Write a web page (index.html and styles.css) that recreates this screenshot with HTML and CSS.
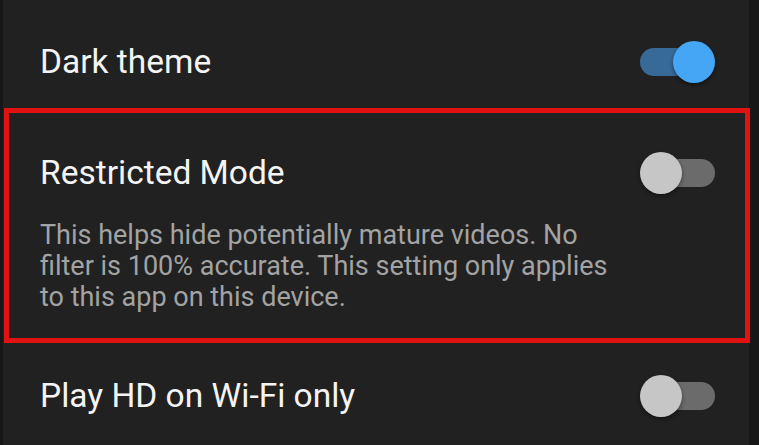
FILE: index.html
```html
<!DOCTYPE html>
<html>

<head>
    <meta charset="utf-8">
    <title>Settings</title>
    <link rel="stylesheet" href="styles.css">
</head>

<body>
    <div id="panel">
        <div class="row first">
            <p class="title">Dark theme</p>
            <div class="switch on">
                <span class="track"></span>
                <span class="thumb"></span>
            </div>
        </div>
        <div class="row highlight">
            <div class="head">
                <p class="title">Restricted Mode</p>
                <div class="switch">
                    <span class="track"></span>
                    <span class="thumb"></span>
                </div>
            </div>
            <p class="desc">This helps hide potentially mature videos. No filter is 100% accurate. This setting only applies to this app on this device.</p>
        </div>
        <div class="row last">
            <p class="title">Play HD on Wi-Fi only</p>
            <div class="switch">
                <span class="track"></span>
                <span class="thumb"></span>
            </div>
        </div>
    </div>
</body>

</html>
```

FILE: styles.css
```css
* {
    margin: 0;
    padding: 0;
    box-sizing: border-box;
}

body {
    background-color: #171717;
    font-family: 'Roboto', sans-serif;
    height: 445px;
    overflow: hidden;
}

#panel {
    background-color: #212121;
    margin-left: 3px;
    width: 746px;
    height: 445px;
}

.row {
    display: flex;
    align-items: center;
    justify-content: space-between;
    padding-left: 37px;
    padding-right: 34px;
}
.row.first {
    height: 108px;
    padding-top: 16px;
}
.row.last {
    height: 102px;
    align-items: flex-start;
    padding-top: 32px;
}

.row.highlight {
    display: block;
    height: 235px;
    margin-left: 1px;
    margin-right: -1px;
    border: 5px solid #e01212;
    padding: 39px 30px 0 31px;
}
.head {
    display: flex;
    align-items: center;
    justify-content: space-between;
}

.title {
    color: #f4f4f4;
    font-size: 33.5px;
    line-height: 42px;
}

.desc {
    color: #a3a3a3;
    font-size: 27px;
    line-height: 31px;
    margin-top: 26px;
    width: 586px;
}

.switch {
    position: relative;
    width: 75px;
    height: 42px;
    flex-shrink: 0;
}
.switch .track {
    position: absolute;
    top: 7px;
    left: 6px;
    width: 69px;
    height: 28px;
    border-radius: 14px;
    background-color: #6b6b6b;
}
.switch .thumb {
    position: absolute;
    top: 0;
    left: 0;
    width: 42px;
    height: 42px;
    border-radius: 50%;
    background-color: #c6c6c6;
    box-shadow: 0 2px 4px rgba(0, 0, 0, 0.45);
}
.switch.on .track {
    left: 0;
    background-color: #386a98;
}
.switch.on .thumb {
    left: 33px;
    background-color: #45a6f5;
}
```
